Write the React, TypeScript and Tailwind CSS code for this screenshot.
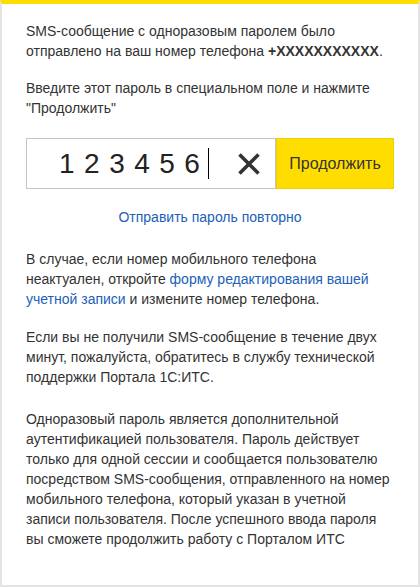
export default function App() {
  return (
    <div className="min-h-[587px] bg-white" style={{ fontFamily: '"Liberation Sans", Arial, sans-serif' }}>
      <div className="min-h-[587px] border-x-2 border-b-2 border-t-4 border-x-[#e4e4e4] border-b-[#e4e4e4] border-t-[#ffdd00] bg-white px-6 pt-[17px] pb-8 text-[14px] leading-[20px] text-[#333333]">
        <p>
          SMS-сообщение с одноразовым паролем было отправлено на ваш номер телефона{' '}
          <b className="font-bold">+XXXXXXXXXXX</b>.
        </p>
        <p className="mt-[17px]">Введите этот пароль в специальном поле и нажмите "Продолжить"</p>

        <div className="mt-5 flex h-[51px] w-[368px]">
          <div className="flex flex-1 items-center border border-[#c4c4c4] bg-white pl-8">
            <span className="text-[28px] leading-none tracking-[9.5px] text-[#222222]">123456</span>
            <span className="-ml-px h-[31px] w-px bg-black" />
            <button className="ml-auto mr-[14px] flex h-6 w-6 items-center justify-center" aria-label="Очистить">
              <svg width="24" height="24" viewBox="0 0 24 24" fill="none">
                <path d="M2.5 2.5 L21.5 21.5 M21.5 2.5 L2.5 21.5" stroke="#333333" strokeWidth="3.6" strokeLinecap="butt" />
              </svg>
            </button>
          </div>
          <button className="w-[118px] border border-[#f0cf00] bg-[#ffdd00] text-[16px] text-[#333333]">
            Продолжить
          </button>
        </div>

        <div className="mt-[18px] text-center">
          <a href="#" className="text-[#2160b8]">Отправить пароль повторно</a>
        </div>

        <p className="mt-[22px]">
          В случае, если номер мобильного телефона неактуален, откройте{' '}
          <a href="#" className="text-[#2160b8]">форму редактирования вашей учетной записи</a> и измените номер
          телефона.
        </p>
        <p className="mt-[18px]">
          Если вы не получили SMS-сообщение в течение двух минут, пожалуйста, обратитесь в службу технической
          поддержки Портала 1С:ИТС.
        </p>
        <p className="mt-[22px]">
          Одноразовый пароль является дополнительной аутентификацией пользователя. Пароль действует только для
          одной сессии и сообщается пользователю посредством SMS-сообщения, отправленного на номер мобильного
          телефона, который указан в учетной записи пользователя. После успешного ввода пароля вы сможете
          продолжить работу с Порталом ИТС
        </p>
      </div>
    </div>
  );
}
